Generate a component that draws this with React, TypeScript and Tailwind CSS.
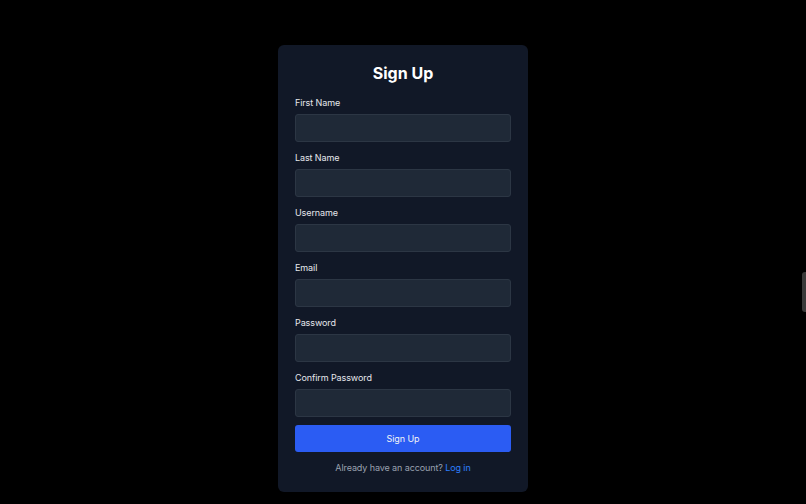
import React from 'react';

const fields = ['First Name', 'Last Name', 'Username', 'Email', 'Password', 'Confirm Password'];

export default function App() {
  return (
    <div
      className="relative min-h-screen w-full bg-black pt-[45px] flex justify-center"
      style={{ fontFamily: 'Inter, "Noto Sans", sans-serif' }}
    >
      <div className="w-[250px] h-[447px] rounded-md bg-[#111827] px-[17px] pt-[16px] flex flex-col">
        <h1 className="text-center text-[16px] leading-[24px] font-bold text-white mb-[12px]">Sign Up</h1>

        <form className="flex flex-col" onSubmit={(e) => e.preventDefault()}>
          {fields.map((label) => (
            <div key={label} className="mb-[10px]">
              <label className="block text-[9px] tracking-[-0.1px] leading-[12px] text-gray-200 mb-[5px]">{label}</label>
              <input
                type={label.includes('Password') ? 'password' : 'text'}
                className="block w-full h-[28px] rounded-[3px] bg-[#1f2937] border border-[#2c3644] outline-none"
              />
            </div>
          ))}

          <button
            type="submit"
            className="-mt-[2px] h-[27px] w-full rounded-[3px] bg-[#2b5cf3] text-[9px] tracking-[-0.1px] text-gray-100"
          >
            Sign Up
          </button>
        </form>

        <p className="mt-[10px] text-center text-[9px] tracking-[-0.1px] leading-[12px] text-gray-400">
          Already have an account? <a href="#" className="text-blue-500">Log in</a>
        </p>
      </div>

      {/* edge tab */}
      <div className="absolute right-0 top-[272px] w-[4px] h-[40px] rounded-l-[3px] bg-[#3a3a3a]" />
    </div>
  );
}
